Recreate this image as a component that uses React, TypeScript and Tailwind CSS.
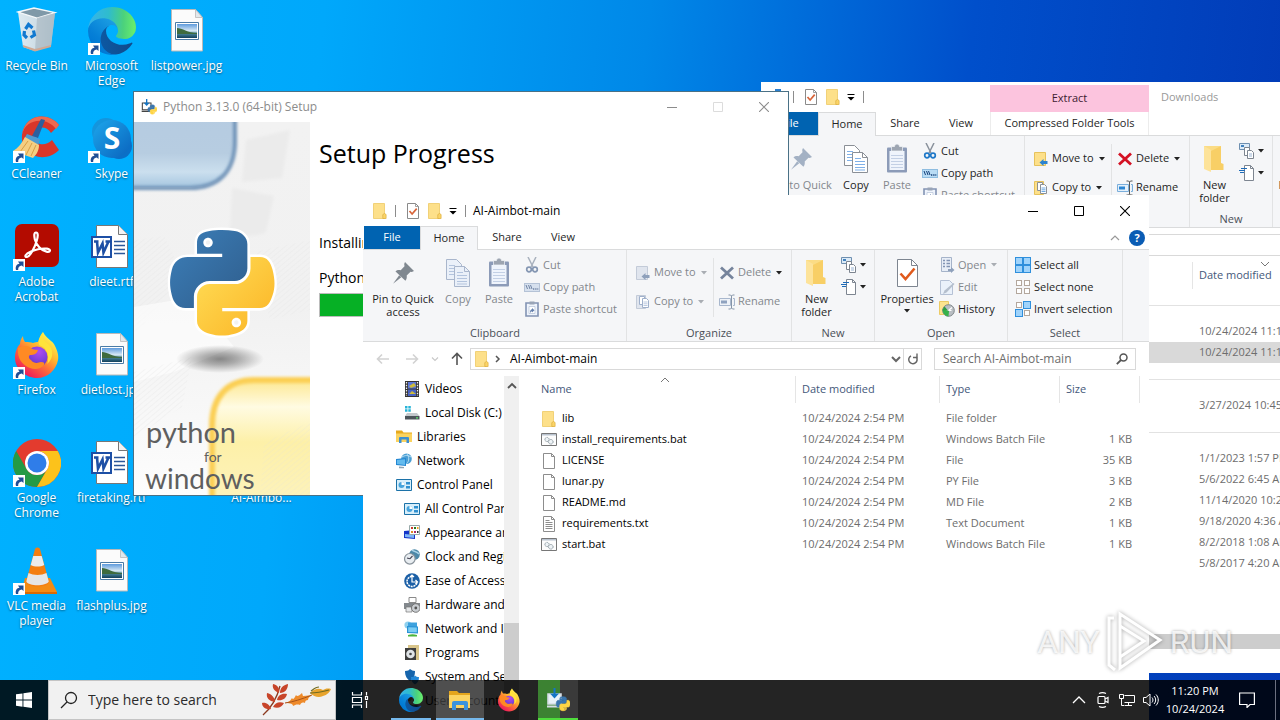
import type { ReactNode } from "react";

/* ---------- small drawings ---------- */

type IconProps = { className?: string };

function FolderIcon({ className = "h-4 w-4" }: IconProps) {
  return (
    <svg viewBox="0 0 16 16" className={className} aria-hidden="true">
      <path d="M1.5.5h11v15h-11z" fill="#fde08a" stroke="#edc964" strokeWidth=".8" />
      <path d="M12.500 10.500l1.600 1v4h-3.300v-3.900z" fill="#fbd468" stroke="#dcae3e" strokeWidth=".7" />
    </svg>
  );
}

function CheckPageIcon({ className = "h-4 w-4" }: IconProps) {
  return (
    <svg viewBox="0 0 16 16" className={className} aria-hidden="true">
      <path d="M2.500.5h8l3 3v12h-11z" fill="#fff" stroke="#8a8a8a" />
      <path d="M10.500.5v3h3" fill="none" stroke="#8a8a8a" strokeWidth=".8" />
      <path d="M4.500 8l2.600 3 4.600-5.400" fill="none" stroke="#d8653a" strokeWidth="1.700" />
    </svg>
  );
}

function QatCaret() {
  return (
    <svg viewBox="0 0 8 8" className="h-2 w-2" aria-hidden="true">
      <path d="M.5 1.500h7" stroke="#000" />
      <path d="M.5 4h7L4 7.500z" fill="#000" />
    </svg>
  );
}

function Caret({ dim = false }: { dim?: boolean }) {
  return (
    <svg viewBox="0 0 6 4" className="h-1 w-1.5" aria-hidden="true">
      <path d="M0 0h6L3 3.400z" fill={dim ? "#a9adb3" : "#222"} />
    </svg>
  );
}

function PinIcon({ blue = false }: { blue?: boolean }) {
  return (
    <svg viewBox="0 0 32 32" className="h-8 w-8" aria-hidden="true">
      <g fill={blue ? "#a3b1c4" : "#808890"}>
        <path d="M18 5l9 9-2.200 1-1.300-.2-3.800 3.800c.4 2.300-.2 4-1.300 5.200L8.500 14.500c1.200-1.200 3-1.700 5.200-1.200L17.500 9.300 17.200 7z" />
        <path d="M12.200 18.200l2.100 2.100-8.300 6.500z" />
      </g>
    </svg>
  );
}

function CopyIcon({ on }: { on: boolean }) {
  const edge = on ? "#8a8f96" : "#a9b6cc";
  const line = on ? "#7fb0e8" : "#b3c4de";
  return (
    <svg viewBox="0 0 32 32" className="h-8 w-8" aria-hidden="true">
      <path d="M4.500 2.500h10l5 5v15h-15z" fill={on ? "#fff" : "#eaf0f9"} stroke={edge} />
      <path d="M7 8.500h6M7 11.500h9M7 14.500h9M7 17.500h9" stroke={line} />
      <path d="M12.500 9.500h10l5 5v15h-15z" fill={on ? "#fff" : "#eaf0f9"} stroke={edge} />
      <path d="M22.500 9.500v5h5" fill="none" stroke={edge} />
      <path d="M15 15.500h6M15 18.500h10M15 21.500h10M15 24.500h10M15 27h10" stroke={line} strokeWidth="1.200" />
    </svg>
  );
}

function PasteIcon() {
  return (
    <svg viewBox="0 0 32 32" className="h-8 w-8" aria-hidden="true">
      <rect x="6" y="4.500" width="20" height="25" rx="1" fill="#8c9bb8" />
      <path d="M8.500 8h15v19h-15z" fill="#eff4fc" />
      <path d="M10 12.500h12M10 15.500h12M10 18.500h12M10 21.500h12M10 24.500h12" stroke="#c3d0e5" />
      <path d="M10.500 3.500h3a2.500 2.500 0 0 1 5 0h3v4.500h-11z" fill="#9da5b1" stroke="#f4f6f9" strokeWidth=".7" />
    </svg>
  );
}

function CutIcon({ on }: { on: boolean }) {
  return (
    <svg viewBox="0 0 16 16" className="h-4 w-4" aria-hidden="true">
      <path d="M4 0l5 10M12 0L7 10" stroke={on ? "#8a929c" : "#a9b2be"} strokeWidth="1.500" />
      <g fill="none" stroke={on ? "#1f78c8" : "#8496b2"} strokeWidth="1.700">
        <circle cx="5" cy="12.500" r="2.300" />
        <circle cx="11" cy="12.500" r="2.300" />
      </g>
    </svg>
  );
}

function CopyPathIcon({ on }: { on: boolean }) {
  return (
    <svg viewBox="0 0 16 16" className="h-4 w-4" aria-hidden="true">
      <rect x=".5" y="4.500" width="15" height="8" fill={on ? "#b9dcf5" : "#d6e0ee"} stroke={on ? "#8fbde0" : "#b4c2d6"} />
      <path d="M2 6l1.500 4M4.500 6l1.500 4M6.500 6L8 10" stroke={on ? "#143e78" : "#6f83a4"} />
      <path d="M9 10h1.300M11.200 10h1.300M13.300 10h1" stroke={on ? "#143e78" : "#6f83a4"} strokeWidth="1.300" />
    </svg>
  );
}

function PasteShortcutIcon() {
  return (
    <svg viewBox="0 0 16 16" className="h-4 w-4" aria-hidden="true">
      <path d="M2 2h12v13H2z" fill="#eff4fc" stroke="#8293b3" strokeWidth="1.600" />
      <path d="M5.500.5h5v3h-5z" fill="#99a4b6" />
      <path d="M5 5.500h6v7H5z" fill="#fff" stroke="#a9b8d2" strokeWidth=".6" />
      <path d="M6 12c0-2.500.8-3.500 2-3.700V7l2.500 2.300-2.500 2.300v-1.400C7.500 10.300 7 11 6 12z" fill="#6580ad" />
    </svg>
  );
}

function MoveToIcon({ on }: { on: boolean }) {
  return (
    <svg viewBox="0 0 16 16" className="h-4 w-4" aria-hidden="true">
      <path d="M1.500 1.500h11v13h-11z" fill={on ? "#fde08a" : "#e0e5ee"} stroke={on ? "#e6c25c" : "#c3cbd8"} />
      <path d="M6.500 11.500l4-3.500v2h4v3h-4v2z" fill={on ? "#2b83d0" : "#8ea0bb"} />
    </svg>
  );
}

function CopyToIcon({ on }: { on: boolean }) {
  return (
    <svg viewBox="0 0 16 16" className="h-4 w-4" aria-hidden="true">
      <path d="M1.500 1.500h9v13h-9z" fill={on ? "#fde08a" : "#e0e5ee"} stroke={on ? "#e6c25c" : "#c3cbd8"} />
      <path d="M4.500 2.500h5v8h-5z" fill="#fff" stroke={on ? "#8b9096" : "#9fb0cb"} />
      <path d="M7.500 4.500h4l2 2v7h-6z" fill="#fff" stroke={on ? "#8b9096" : "#9fb0cb"} />
      <path d="M8.500 8h4M8.500 9.800h4M8.500 11.500h4" stroke={on ? "#5e9fe0" : "#b3c4de"} strokeWidth=".9" />
    </svg>
  );
}

function DeleteIcon({ on }: { on: boolean }) {
  return (
    <svg viewBox="0 0 16 16" className="h-4 w-4" aria-hidden="true">
      <path d="M2 2.500l12 11M14 2.500l-12 11" stroke={on ? "#d41123" : "#76849c"} strokeWidth="2.800" />
    </svg>
  );
}

function RenameIcon({ on }: { on: boolean }) {
  return (
    <svg viewBox="0 0 16 16" className="h-4 w-4" aria-hidden="true">
      <path d="M.5 4.500h11v7H.5zM14 4.500h1.500v7H14" fill={on ? "#e5f1fb" : "#eef2f8"} stroke={on ? "#7aaedb" : "#a8b7cd"} />
      <path d="M2 6.500h6v3H2z" fill={on ? "#2d86d3" : "#8fa2bf"} />
      <path d="M9.500 1h2l1 1 1-1h2M12.500 2v12M9.500 15h2l1-1 1 1h2" fill="none" stroke={on ? "#555" : "#8594a8"} />
    </svg>
  );
}

function NewFolderIcon() {
  return (
    <svg viewBox="0 0 32 32" className="h-8 w-8" aria-hidden="true">
      <path d="M5 3h17v18H5z" fill="#fbdc85" />
      <path d="M12 8l10-5v17l2.500 1v6H12z" fill="#f8cf66" />
      <path d="M5 3l7 4v22l-7-3z" fill="#fde39a" />
    </svg>
  );
}

function NewItemIcon() {
  return (
    <svg viewBox="0 0 16 16" className="h-4 w-4" aria-hidden="true">
      <path d="M.5.500h10v6H.5z" fill="#dcebf8" stroke="#6e8fb0" />
      <path d="M2 2h3v2H2z" fill="#3f80bd" />
      <path d="M5.500 4.500h5v8h-5z" fill="#fff" stroke="#7d8590" />
      <path d="M8.500 7.500h4l2 2v6h-6z" fill="#fff" stroke="#7d8590" />
      <path d="M10 11h3M10 13h3" stroke="#9ab4d4" />
    </svg>
  );
}

function EasyAccessIcon() {
  return (
    <svg viewBox="0 0 16 16" className="h-4 w-4" aria-hidden="true">
      <path d="M5.500.5h6l3 3v12h-9z" fill="#fff" stroke="#7d8590" />
      <path d="M11.500.5v3h3" fill="none" stroke="#7d8590" />
      <path d="M2 3.500h6M0 5.500h6M1 7.500h4" stroke="#1e6bb8" strokeWidth="1.200" />
    </svg>
  );
}

function PropertiesIcon() {
  return (
    <svg viewBox="0 0 32 32" className="h-8 w-8" aria-hidden="true">
      <path d="M6.500 2.500h14l6 6v21h-20z" fill="#fff" stroke="#7d8590" />
      <path d="M20.500 2.500v6h6" fill="none" stroke="#7d8590" />
      <path d="M9.500 16.500l5 5.500 9-10.500" fill="none" stroke="#e05a1c" strokeWidth="2.600" />
    </svg>
  );
}

function OpenIcon() {
  return (
    <svg viewBox="0 0 16 16" className="h-4 w-4" aria-hidden="true">
      <path d="M2.500.5h10v14h-10z" fill="#e8eef7" stroke="#a5b3c9" />
      <path d="M4 3.500h2M4 6.500h2M4 9.500h2M7.500 3.500H11M7.500 6.500H11M7.500 9.500H11" stroke="#8193b3" strokeWidth="1.300" />
      <path d="M9 12h3v-2l3.500 3-3.500 3v-2H9z" fill="#8ea0bb" />
    </svg>
  );
}

function EditIcon() {
  return (
    <svg viewBox="0 0 16 16" className="h-4 w-4" aria-hidden="true">
      <path d="M1.500 1.500h9l3 3v11h-12z" fill="#eaf1fa" stroke="#b5c1d5" />
      <path d="M14.500 4l1 1-8 8.500-3.500 1.500 1.500-3.500z" fill="#b5bfcd" />
    </svg>
  );
}

function HistoryIcon() {
  return (
    <svg viewBox="0 0 16 16" className="h-4 w-4" aria-hidden="true">
      <path d="M.5.500h9v13h-9z" fill="#fde48f" stroke="#eccb64" />
      <circle cx="9.500" cy="9.500" r="5.800" fill="#b9bec3" stroke="#7e8589" />
      <path d="M4 8a6 6 0 0 0 5.500 7.500l.5-5.500z" fill="#37b24a" />
      <path d="M3 9.500l2.500-4 3 3.500z" fill="#2f9e41" />
      <path d="M9.500 9.500L13 6.500M9.500 9.500h3" stroke="#fff" strokeWidth="1.200" />
    </svg>
  );
}

function SelectTiles({ filled }: { filled: [boolean, boolean, boolean, boolean] }) {
  const spots = [
    [0.5, 0.5],
    [8.5, 0.5],
    [0.5, 8.5],
    [8.5, 8.5],
  ];
  return (
    <svg viewBox="0 0 16 16" className="h-4 w-4" aria-hidden="true">
      {spots.map(([x, y], i) =>
        filled[i] ? (
          <rect key={i} x={x} y={y} width="7" height="7" fill="#9fd3fb" stroke="#2f8fdc" />
        ) : (
          <rect key={i} x={x + 1} y={y + 1} width="5" height="5" fill="#fff" stroke="#b3a79d" />
        ),
      )}
    </svg>
  );
}

function PageIcon({ lines = false }: { lines?: boolean }) {
  return (
    <svg viewBox="0 0 16 16" className="h-4 w-4" aria-hidden="true">
      <path d="M2.500.5h8l3 3v12h-11z" fill="#fff" stroke="#8d8d8d" />
      <path d="M10.500.5v3h3" fill="none" stroke="#8d8d8d" />
      {lines && <path d="M4.500 4.500h4M4.500 6.500h7M4.500 8.500h7M4.500 10.500h7M4.500 12.500h7" stroke="#8d8d8d" />}
    </svg>
  );
}

function BatIcon() {
  return (
    <svg viewBox="0 0 16 16" className="h-4 w-4" aria-hidden="true">
      <path d="M.5 1.500h15v12H.5z" fill="#fdfdfd" stroke="#777" />
      <path d="M1 2h14v1.500H1z" fill="#b9c3cf" />
      <g fill="#eef3f6" stroke="#8a979f">
        <circle cx="6" cy="7.500" r="2.100" strokeDasharray="1.200 .5" />
        <circle cx="9.800" cy="9.800" r="2.300" strokeDasharray="1.200 .5" />
      </g>
    </svg>
  );
}

const treeIcons: Record<string, ReactNode> = {
  video: (
    <>
      <path d="M1 0h14v16H1z" fill="#333" />
      <path d="M2.500 1v14M13.500 1v14" stroke="#eee" strokeWidth="1.300" strokeDasharray="1.500 1.200" />
      <path d="M4 1h8v6.500H4z" fill="#5b76d8" />
      <path d="M4 8.500h8V15H4z" fill="#4963c4" />
      <path d="M5 5l5-3 2 3-5 2zM5 13l3-3 4 3" fill="#cdbb3c" />
    </>
  ),
  disk: (
    <>
      <path d="M1 1h2.500v2.500H1zM4.300 1h2.500v2.500H4.300zM1 4.300h2.500v2.500H1zM4.300 4.300h2.500v2.500H4.300z" fill="#28b4d8" />
      <path d="M3 8h10l2.500 3H1z" fill="#c3c8cc" />
      <path d="M1 11h14.500v3.500H1z" fill="#4c545a" />
      <path d="M12 12.800h2" stroke="#59e26a" strokeWidth="1.200" />
    </>
  ),
  library: (
    <>
      <path d="M0 1.500h6l1.500 2H16V13H0z" fill="#e7a91c" />
      <path d="M0 4.500h16V13H0z" fill="#fbd35f" />
      <path d="M3 14V9a1 1 0 0 1 1-1h8a1 1 0 0 1 1 1v5h-2.500v-3.500h-5V14z" fill="#3d8fd1" />
    </>
  ),
  network: (
    <>
      <circle cx="10.500" cy="5.800" r="5.300" fill="#4a9ed4" />
      <path d="M6 4c3-2 6-2 9 0M10.500.5c3 3 3 8 0 10" fill="none" stroke="#b9e0f5" />
      <path d="M0 6l10-1v8L0 12z" fill="#2487d2" />
      <path d="M1 7l8-.8v5.700L1 11z" fill="#63bbee" />
      <path d="M3 13.500l5 .5v1.200H3z" fill="#8ea3b3" />
    </>
  ),
  panel: (
    <>
      <path d="M.5 2.500h15v11H.5z" fill="#d8effb" stroke="#1c72a8" />
      <circle cx="5.500" cy="8" r="3" fill="#46a4dd" />
      <path d="M5.500 8V5a3 3 0 0 1 3 3z" fill="#fff" />
      <path d="M10 5h4v2.500h-4zM10 9h4v2.500h-4z" fill="#2f90d0" />
    </>
  ),
  appearance: (
    <>
      <path d="M0 6l11-1v9L0 13z" fill="#1435c8" />
      <path d="M1 9l9 1v3L1 12z" fill="#7db5f7" />
      <path d="M5.500.5h10v9h-10z" fill="#fff" stroke="#9aa" />
      <path d="M7 2h2v2H7z" fill="#cc3a2f" />
      <path d="M10 2h2v2h-2z" fill="#272" />
      <path d="M13 2h1.500v2H13z" fill="#f0a21f" />
      <path d="M7 6h2v2H7z" fill="#e08a1f" />
      <path d="M10 6h2v2h-2z" fill="#b12d6b" />
      <path d="M13 6h1.500v2H13z" fill="#333" />
    </>
  ),
  clock: (
    <>
      <circle cx="10.500" cy="5.500" r="5.300" fill="#4c88a8" />
      <path d="M8 1c2 2 5 1 7 4" fill="none" stroke="#a9d3e8" strokeWidth="1.500" />
      <circle cx="5.800" cy="9.800" r="5.300" fill="#e8edf1" stroke="#8a949c" strokeWidth="1.200" />
      <path d="M5.800 9.800L8.500 7M5.800 9.800L3 9" stroke="#445" strokeWidth="1.100" />
    </>
  ),
  ease: (
    <>
      <circle cx="8" cy="8" r="7.800" fill="#1b5fa6" />
      <path d="M8 3.500a5 5 0 1 0 5 5" fill="none" stroke="#fff" strokeWidth="1.500" strokeDasharray="2 .8" />
      <path d="M8 2v7h5.500M11.500 7l2 2-2 2M6 4l2-2 2 2" fill="none" stroke="#fff" strokeWidth="1.200" />
    </>
  ),
  hardware: (
    <>
      <path d="M5 .5h7v5H5z" fill="#fff" stroke="#8a8a8a" />
      <path d="M0 6h16v6H0z" fill="#83888d" />
      <path d="M2 10h6v5H2z" fill="#e4e6e8" stroke="#777" strokeWidth=".7" />
      <circle cx="11.800" cy="11" r="4.300" fill="#c9cdd1" stroke="#767676" />
      <circle cx="11.800" cy="11" r="1.400" fill="#555" />
    </>
  ),
  internet: (
    <>
      <circle cx="4" cy="4" r="3.600" fill="#8fd0ee" />
      <path d="M4 1.500h9v7H4z" fill="#3ea2de" />
      <path d="M3 5l11 .5v7L3 12z" fill="#2a93d6" />
      <path d="M4.200 6.200l8.600.4v4.700l-8.600-.3z" fill="#7bcdf4" />
      <path d="M4 14c3-1 6-1 9 0v1.500H4z" fill="#4cb43c" />
    </>
  ),
  programs: (
    <>
      <path d="M4 0h11v15H4z" fill="#d9c58a" />
      <path d="M1 3h11v12H1z" fill="#3d3d3d" />
      <circle cx="6.500" cy="9" r="4.300" fill="#dfe3e6" />
      <circle cx="6.500" cy="9" r="1.300" fill="#444" />
    </>
  ),
  shield: (
    <>
      <path d="M1 2c3 0 4-1 5-2 1.500 1 3 2 5 2 0 6-2 8-5 10-3-2-5-5-5-10z" fill="#1765ac" />
      <path d="M7 8c2.500 0 3-.5 4-1.500C12 7.500 13.500 8 15 8c0 4-1.500 6-4 7.500C8.500 14 7 12 7 8z" fill="#2388d8" />
    </>
  ),
  users: (
    <>
      <circle cx="5" cy="5" r="3" fill="#c98d5c" />
      <path d="M0 15c0-5 10-5 10 0z" fill="#3f9d55" />
      <circle cx="11" cy="6" r="2.500" fill="#d8a575" />
      <path d="M7 15c0-4 9-4 9 0z" fill="#3274c0" />
    </>
  ),
};

function TreeIcon({ name }: { name: string }) {
  return (
    <svg viewBox="0 0 16 16" className="h-4 w-4 shrink-0" aria-hidden="true">
      {treeIcons[name]}
    </svg>
  );
}

/* ---------- application logos ---------- */

function EdgeLogo({ className, id }: { className: string; id: string }) {
  return (
    <svg viewBox="0 0 256 256" className={className} aria-hidden="true">
      <defs>
        <linearGradient id={`${id}a`} x1="63" y1="177" x2="241" y2="177" gradientUnits="userSpaceOnUse">
          <stop offset="0" stopColor="#0c59a4" />
          <stop offset="1" stopColor="#114a8b" />
        </linearGradient>
        <linearGradient id={`${id}b`} x1="157" y1="99" x2="46" y2="221" gradientUnits="userSpaceOnUse">
          <stop offset="0" stopColor="#1b9de2" />
          <stop offset=".2" stopColor="#1595df" />
          <stop offset=".7" stopColor="#0680d7" />
          <stop offset="1" stopColor="#0078d4" />
        </linearGradient>
        <linearGradient id={`${id}c`} x1="20" y1="80" x2="250" y2="90" gradientUnits="userSpaceOnUse">
          <stop offset="0" stopColor="#35b4e8" />
          <stop offset=".4" stopColor="#2fbccd" />
          <stop offset=".75" stopColor="#4bd17c" />
          <stop offset="1" stopColor="#66eb6e" />
        </linearGradient>
      </defs>
      <g transform="translate(-4.630 -4.920)">
        <path d="M235.680 195.460a93.730 93.730 0 0 1-10.540 4.710 101.870 101.870 0 0 1-35.900 6.460c-47.320 0-88.540-32.550-88.540-74.320A31.480 31.480 0 0 1 117.130 105c-42.800 1.800-53.800 46.400-53.800 72.530 0 73.880 68.090 81.370 82.760 81.370 7.910 0 19.840-2.300 27-4.560l1.310-.44a128.340 128.340 0 0 0 66.600-52.800 4 4 0 0 0-5.320-5.640Z" fill={`url(#${id}a)`} />
        <path d="M110.340 246.340A79.200 79.200 0 0 1 87.600 225a80.720 80.720 0 0 1 29.530-120c3.120-1.470 8.450-4.130 15.540-4a32.350 32.350 0 0 1 25.690 13 31.880 31.880 0 0 1 6.360 18.660c0-.21 24.460-79.600-80-79.600-43.900 0-80 41.660-80 78.210a130.150 130.150 0 0 0 12.110 56 128 128 0 0 0 156.380 67.110 75.550 75.550 0 0 1-62.780-8Z" fill={`url(#${id}b)`} />
        <path d="M156.940 153.780c-.81 1.050-3.300 2.500-3.300 5.660 0 2.610 1.700 5.120 4.720 7.230 14.380 10 41.490 8.680 41.560 8.680a59.560 59.560 0 0 0 30.270-8.350 61.380 61.380 0 0 0 30.430-52.880c.26-22.410-8-37.310-11.340-43.910C228.090 28.760 182.350 4.920 132.610 4.920a128 128 0 0 0-128 126.200c.48-36.540 36.800-66.050 80-66.050 3.500 0 23.460.34 42 10.070 16.340 8.580 24.900 18.940 30.850 29.210 6.180 10.670 7.280 24.150 7.280 29.520s-2.740 13.330-7.800 19.910Z" fill={`url(#${id}c)`} />
      </g>
    </svg>
  );
}

function FirefoxLogo({ className, id }: { className: string; id: string }) {
  return (
    <svg viewBox="0 0 48 48" className={className} aria-hidden="true">
      <defs>
        <linearGradient id={`${id}a`} x1="38" y1="6" x2="10" y2="42" gradientUnits="userSpaceOnUse">
          <stop offset="0" stopColor="#fff44f" />
          <stop offset=".35" stopColor="#ffb62e" />
          <stop offset=".6" stopColor="#ff7139" />
          <stop offset="1" stopColor="#ee1a5b" />
        </linearGradient>
        <radialGradient id={`${id}b`} cx=".6" cy=".25" r=".8">
          <stop offset="0" stopColor="#b04bf0" />
          <stop offset=".6" stopColor="#7a3fdc" />
          <stop offset="1" stopColor="#4f37b5" />
        </radialGradient>
      </defs>
      <path d="M30 1c2 4 5 6 8 9 2 1 3 3 4 5 2 4 4 9 3 14-2 10-10 18-21 18S2 38 2 27c0-6 2-11 5-14 0-3 1-5 3-8 0 3 1 4 2 6 3 0 6 0 8 1 2-1 4-1 5-1 1-4 3-7 5-10z" fill={`url(#${id}a)`} />
      <circle cx="24" cy="26" r="10.500" fill={`url(#${id}b)`} />
      <path d="M5 17c4-2 8-3 12-1 1 2 4 3 8 3-1 4-4 5-8 5-2 1-1 4 1 5 3 4 7 3 10 2 3 0 4 1 3 3-3 4-9 5-14 3C9 34 4 27 5 17z" fill="#ff8a24" />
      <path d="M30 1c-3 4-5 8-4 13 6 2 9 7 9 12 0 3 0 5-1 7 7-5 7-16 0-21-4-3-5-6-4-11z" fill="#ffe33b" />
    </svg>
  );
}

const pyBlue =
  "M63.391 1.988c-4.222.02-8.252.379-11.800 1.007-10.450 1.846-12.346 5.710-12.346 12.837v9.411h24.693v3.137H29.977c-7.176 0-13.460 4.313-15.426 12.521-2.268 9.405-2.368 15.275 0 25.096 1.755 7.311 5.947 12.519 13.124 12.519h8.491V67.234c0-8.151 7.051-15.340 15.426-15.340h24.665c6.866 0 12.346-5.654 12.346-12.548V15.833c0-6.693-5.646-11.720-12.346-12.837-4.244-.706-8.645-1.027-12.866-1.008zM50.037 9.557c2.550 0 4.634 2.117 4.634 4.721 0 2.593-2.083 4.690-4.634 4.690-2.560 0-4.633-2.097-4.633-4.690-.001-2.604 2.073-4.721 4.633-4.721z";
const pyYellow =
  "M91.682 28.380v10.966c0 8.500-7.208 15.655-15.426 15.655H51.591c-6.756 0-12.346 5.783-12.346 12.549v23.515c0 6.691 5.818 10.628 12.346 12.547 7.816 2.297 15.312 2.713 24.665 0 6.216-1.801 12.346-5.423 12.346-12.547v-9.412H63.938v-3.138h37.012c7.176 0 9.852-5.005 12.348-12.519 2.578-7.735 2.467-15.174 0-25.096-1.774-7.145-5.161-12.521-12.348-12.521h-9.268zM77.809 87.927c2.561 0 4.634 2.097 4.634 4.692 0 2.602-2.074 4.719-4.634 4.719-2.550 0-4.633-2.117-4.633-4.719 0-2.595 2.083-4.692 4.633-4.692z";

function PythonSetupIcon({ className, light = false }: { className: string; light?: boolean }) {
  return (
    <svg viewBox="0 0 24 24" className={className} aria-hidden="true">
      <path d="M2 6h13v10H2z" fill={light ? "#e8f1f8" : "#fff"} stroke={light ? "#d5dde5" : "#444"} strokeWidth="1.600" />
      <path d="M1 18.500h13" stroke={light ? "#d5dde5" : "#444"} strokeWidth="2" />
      <path d="M7.500 0h2v5.500H13L8.500 10.500 4 5.500h3.500z" fill="#1475c4" />
      <g transform="translate(8.500 8.500) scale(.135)">
        <path d={pyBlue} fill="#3a75ad" stroke="#3a75ad" strokeWidth="4" />
        <path d={pyYellow} fill="#ffd545" stroke="#ffd545" strokeWidth="4" />
      </g>
    </svg>
  );
}

function PictureFile() {
  return (
    <svg viewBox="0 0 48 48" className="h-12 w-12" aria-hidden="true">
      <defs>
        <linearGradient id="sky" x1="0" y1="0" x2="0" y2="1">
          <stop offset="0" stopColor="#5e9bdd" />
          <stop offset=".5" stopColor="#dcebf5" />
          <stop offset=".65" stopColor="#4d8a9c" />
          <stop offset="1" stopColor="#123f5c" />
        </linearGradient>
      </defs>
      <path d="M8.500 2.500h24l7 8v33.500h-31z" fill="#fbfbfb" stroke="#b9b9b9" />
      <path d="M32.500 2.500v8h7z" fill="#e2e8ec" stroke="#b9b9b9" strokeWidth=".8" />
      <path d="M12.500 15.500h23v17h-23z" fill="#fff" stroke="#4a7ba6" />
      <path d="M14 17h20v14H14z" fill="url(#sky)" />
      <path d="M14 21c5 0 11 5 20 5v1H14z" fill="#3f6b3e" />
    </svg>
  );
}

function WordFile() {
  return (
    <svg viewBox="0 0 48 48" className="h-12 w-12" aria-hidden="true">
      <path d="M8.500 2.500h22l9 9v33h-31z" fill="#fff" stroke="#777" />
      <path d="M30.500 2.500v9h9" fill="#f3f3f3" stroke="#777" />
      <path d="M26 18.500h11M26 22.500h11M26 26.500h11M26 30.500h11" stroke="#2b579a" strokeWidth="1.500" />
      <path d="M4 14h19v20H4z" fill="#fff" stroke="#1d4fa5" strokeWidth="2" />
      <path d="M6 18.500h4.500M9 18.500l1 11 4.500-9 1 9 5-11M17.500 18.500H22" fill="none" stroke="#1d4fa5" strokeWidth="2.600" />
    </svg>
  );
}

function RecycleBin() {
  return (
    <svg viewBox="0 0 48 48" className="h-12 w-12" aria-hidden="true">
      <defs>
        <linearGradient id="bin" x1="0" y1="0" x2="1" y2="0">
          <stop offset="0" stopColor="#e9eef1" />
          <stop offset=".5" stopColor="#d9e0e5" />
          <stop offset="1" stopColor="#b4c1ca" />
        </linearGradient>
      </defs>
      <path d="M5 5h19l18 1-4 33-16 5-12-4z" fill="url(#bin)" opacity=".95" />
      <path d="M5 5l16-4 21 4.500L24 11z" fill="#7f99a8" stroke="#f5f8fa" strokeWidth="1.300" />
      <path d="M24 11l18-5-4 33-16 5z" fill="#aebcc6" opacity=".75" />
      <path d="M10 38l12 4 16-4v2l-16 4.500L10 40z" fill="#cfa994" />
      <g fill="none" stroke="#1179d0" strokeWidth="3.200">
        <path d="M12.500 22l3-4.500 4 3.500" />
        <path d="M20.500 23.500l1 4.500-4 2.500" />
        <path d="M14 31l-3-3 .5-4" />
      </g>
    </svg>
  );
}

function CCleaner() {
  return (
    <svg viewBox="0 0 48 48" className="h-12 w-12" aria-hidden="true">
      <path d="M46 10C36-3 12-2 9 20c-2 20 22 30 37 15l-7-10c-8 8-18 4-18-5 1-9 12-10 17-2z" fill="#d9362a" />
      <path d="M46 10C36-3 12-2 9 20c3-16 24-19 34-6z" fill="#ee6a50" />
      <path d="M28 4l4 1-7 18-6-2z" fill="#2c5f9e" />
      <path d="M14 19l13 5-2 7-14-7z" fill="#4f9bd1" />
      <path d="M12 22l14 8c0 6-3 10-6 13L0 36c5-3 9-8 12-14z" fill="#f5ce82" />
      <path d="M15 26L7 37M19 28l-6 12M23 30l-5 11" stroke="#d99e45" />
    </svg>
  );
}

function Skype() {
  return (
    <svg viewBox="0 0 48 48" className="h-12 w-12" aria-hidden="true">
      <defs>
        <linearGradient id="skype" x1="0" y1="0" x2="1" y2="1">
          <stop offset="0" stopColor="#1ca7ec" />
          <stop offset="1" stopColor="#0a63bd" />
        </linearGradient>
      </defs>
      <circle cx="18" cy="17" r="14" fill="#1495dd" />
      <circle cx="31" cy="31" r="13" fill="#0b6fc6" />
      <circle cx="24" cy="24" r="19" fill="url(#skype)" />
      <text x="24" y="34" textAnchor="middle" fontSize="30" fontWeight="700" fill="#fff" fontFamily="Open Sans">
        S
      </text>
    </svg>
  );
}

function Acrobat() {
  return (
    <svg viewBox="0 0 48 48" className="h-12 w-12" aria-hidden="true">
      <rect x="2" y="1" width="44" height="43" rx="7" fill="#b30b00" />
      <path
        d="M23 9.500c2.500 0 2 4.500.5 9-2 6.500-6.500 15-9.500 15.500-3 0-2-3 4-5.500 5-2 11.500-3.500 16-2.800 4.500.8 3.500 3.800-.5 3-5-1-10.500-7-11.700-12.500C21 12.500 21 9.500 23 9.500z"
        fill="none"
        stroke="#fff"
        strokeWidth="2.200"
      />
    </svg>
  );
}

function Chrome() {
  return (
    <svg viewBox="0 0 48 48" className="h-12 w-12" aria-hidden="true">
      <circle cx="24" cy="24" r="24" fill="#e33b2e" />
      <path d="M3.200 12A24 24 0 0 0 24 48l10.400-18A12 12 0 0 1 13.600 30z" fill="#249a45" />
      <path d="M24 12h20.800A24 24 0 0 1 24 48l10.400-18A12 12 0 0 0 24 12z" fill="#fcc21b" />
      <circle cx="24" cy="24" r="12" fill="#fff" />
      <circle cx="24" cy="24" r="9.500" fill="#2f7de9" />
    </svg>
  );
}

function Vlc() {
  return (
    <svg viewBox="0 0 48 48" className="h-12 w-12" aria-hidden="true">
      <path d="M12 31h25l7 14c0 1-1 2-2 2H8z" fill="#f48b14" />
      <path d="M8 45h36v2H8z" fill="#d96a05" />
      <path d="M22 2c1-2 4-2 5 0l9 33c-1 6-22 6-23 0z" fill="#f47e10" />
      <path d="M20.200 9h8.500l2.500 9c-4 2-9.500 2-13.500 0z" fill="#ececec" />
      <path d="M15.500 26c5 2.500 13 2.500 18 0l2.300 8.500c-3 5-20 5-22.500 0z" fill="#e6e6e6" />
    </svg>
  );
}

function ShortcutArrow() {
  return (
    <svg viewBox="0 0 12 12" className="absolute bottom-0 left-0 h-3 w-3" aria-hidden="true">
      <path d="M0 0h12v12H0z" fill="#fff" />
      <path d="M3 11c-1-4 1-6 3.500-6.300L5 2.500h5.500V8L8.800 6.500C6 7 5 8.500 5.200 11z" fill="#1f4e96" />
    </svg>
  );
}

/* ---------- desktop ---------- */

type DesktopItem = { label: string; icon: ReactNode; shortcut?: boolean } | null;

const desktop: DesktopItem[][] = [
  [
    { label: "Recycle Bin", icon: <RecycleBin /> },
    { label: "CCleaner", icon: <CCleaner />, shortcut: true },
    { label: "Adobe Acrobat", icon: <Acrobat />, shortcut: true },
    { label: "Firefox", icon: <FirefoxLogo className="h-12 w-12" id="ffd" />, shortcut: true },
    { label: "Google Chrome", icon: <Chrome />, shortcut: true },
    { label: "VLC media player", icon: <Vlc />, shortcut: true },
  ],
  [
    { label: "Microsoft Edge", icon: <EdgeLogo className="h-12 w-12" id="edd" />, shortcut: true },
    { label: "Skype", icon: <Skype />, shortcut: true },
    { label: "dieet.rtf", icon: <WordFile /> },
    { label: "dietlost.jpg", icon: <PictureFile /> },
    { label: "firetaking.rtf", icon: <WordFile /> },
    { label: "flashplus.jpg", icon: <PictureFile /> },
  ],
  [{ label: "listpower.jpg", icon: <PictureFile /> }],
  [null, null, null, null, { label: "AI-Aimbo...", icon: <FolderIcon className="h-12 w-12" /> }],
];

function DesktopIcons() {
  return (
    <div className="flex">
      {desktop.map((col, c) => (
        <div key={c} className="flex w-[75px] flex-col">
          {col.map((item, r) => (
            <div key={r} className="flex h-[108px] flex-col items-center pr-0.5 pt-[7px]">
              {item && (
                <>
                  <div className="relative h-12 w-12">
                    {item.icon}
                    {item.shortcut && <ShortcutArrow />}
                  </div>
                  <span className="mt-[3px] w-[72px] whitespace-normal text-center leading-[15px] text-white [text-shadow:0_1px_2px_rgba(0,0,0,0.500)]">
                    {item.label}
                  </span>
                </>
              )}
            </div>
          ))}
        </div>
      ))}
    </div>
  );
}

/* ---------- python installer ---------- */

function InstallerArt() {
  return (
    <svg viewBox="0 0 176 373" className="h-full w-[176px] shrink-0" role="img" aria-label="python for windows">
      <defs>
        <linearGradient id="paper" x1="0" y1="0" x2="0" y2="1">
          <stop offset="0" stopColor="#f2f2f2" />
          <stop offset=".5" stopColor="#f1f1f1" />
          <stop offset="1" stopColor="#fdfdfd" />
        </linearGradient>
        <linearGradient id="blueTab" x1="0" y1="0" x2="0" y2="1">
          <stop offset="0" stopColor="#b5cbe1" />
          <stop offset=".55" stopColor="#b7cde1" />
          <stop offset=".8" stopColor="#cbdfee" />
          <stop offset="1" stopColor="#a6c6e0" />
        </linearGradient>
        <linearGradient id="yellowTab" x1="0" y1="0" x2="0" y2="1">
          <stop offset="0" stopColor="#fde78e" />
          <stop offset=".22" stopColor="#fffbe2" />
          <stop offset=".5" stopColor="#fdf0a8" />
          <stop offset="1" stopColor="#fdf3bd" />
        </linearGradient>
        <linearGradient id="pyB" x1="0" y1="0" x2="1" y2="1">
          <stop offset="0" stopColor="#3c7fb9" />
          <stop offset="1" stopColor="#2f5d8c" />
        </linearGradient>
        <linearGradient id="pyY" x1="0" y1="0" x2="1" y2="1">
          <stop offset="0" stopColor="#ffdf58" />
          <stop offset="1" stopColor="#fbb324" />
        </linearGradient>
        <radialGradient id="shade">
          <stop offset="0" stopColor="#000" stopOpacity=".45" />
          <stop offset=".4" stopColor="#000" stopOpacity=".3" />
          <stop offset="1" stopColor="#000" stopOpacity="0" />
        </radialGradient>
        <pattern id="hatch" width="4" height="4" patternUnits="userSpaceOnUse" patternTransform="rotate(50)">
          <path d="M0 0v4" stroke="#dedede" strokeWidth="1.200" />
        </pattern>
        <filter id="soft" x="-10%" y="-10%" width="120%" height="120%">
          <feGaussianBlur stdDeviation="1.600" />
        </filter>
      </defs>
      <rect width="176" height="373" fill="url(#paper)" />
      <path d="M112 18l44-10-8 48-40 4zM98 66l42 8-8 36c-12 6-26 4-36-2z" fill="#ebebeb" filter="url(#soft)" />
      <path d="M0 118l30-4 20 40-50 60zM120 130l56-12v70l-40 10z" fill="url(#hatch)" opacity=".35" />
      <path d="M0 185l60-10 40 50-60 25-40 10z" fill="#fff" opacity=".6" />
      <path d="M0 250l58-15-10 50-48 30z" fill="url(#hatch)" opacity=".4" />
      <path d="M-10-10h111v28c0 32-18 47-44 47H-10z" fill="url(#blueTab)" />
      <path d="M-10 66h66c27 0 45-15 45-47v-30" fill="none" stroke="#6f93b8" strokeWidth="4" filter="url(#soft)" />
      <path d="M180 257h-60c-28 0-42 18-42 46v80h102z" fill="url(#yellowTab)" />
      <path d="M180 258h-60c-28 0-42 18-42 46v80" fill="none" stroke="#fbcf55" strokeWidth="6" filter="url(#soft)" />
      <path d="M130 320l46-20v73h-50z" fill="url(#hatch)" opacity=".3" />
      <ellipse cx="86" cy="237" rx="44" ry="14" fill="url(#shade)" />
      <g transform="translate(23 106) scale(1.020)">
        <g fill="#fff" stroke="#fff" strokeWidth="5">
          <path d={pyBlue} />
          <path d={pyYellow} />
        </g>
        <path d={pyBlue} fill="url(#pyB)" />
        <path d={pyYellow} fill="url(#pyY)" />
      </g>
      <g fill="#5f5f5f" fontFamily="Lato, Open Sans, sans-serif" fontWeight="400">
        <text x="12" y="321" fontSize="29">python</text>
        <text x="70" y="340" fontSize="14">for</text>
        <text x="11" y="367" fontSize="28">windows</text>
      </g>
    </svg>
  );
}

function CaptionButtons({ color, maxColor }: { color: string; maxColor: string }) {
  return (
    <div className="ml-auto flex h-full items-center pr-px">
      <button aria-label="Minimize" className="flex h-full w-[46px] items-center justify-center">
        <svg viewBox="0 0 10 10" className="h-2.5 w-2.5">
          <path d="M0 5.500h10" stroke={color} />
        </svg>
      </button>
      <button aria-label="Maximize" className="flex h-full w-[46px] items-center justify-center">
        <svg viewBox="0 0 10 10" className="h-2.5 w-2.5">
          <path d="M.5.5h9v9h-9z" fill="none" stroke={maxColor} />
        </svg>
      </button>
      <button aria-label="Close" className="flex h-full w-[46px] items-center justify-center">
        <svg viewBox="0 0 10 10" className="h-2.5 w-2.5">
          <path d="M0 0l10 10M10 0L0 10" stroke={color} strokeWidth="1.100" />
        </svg>
      </button>
    </div>
  );
}

function InstallerWindow() {
  return (
    <section className="absolute left-[133px] top-[91px] flex h-[405px] w-[656px] flex-col border border-[#4a7186] bg-white">
      <header className="flex h-[30px] shrink-0 items-center pl-[7px] text-[#8c8c8c]">
        <PythonSetupIcon className="h-4 w-4" />
        <span className="pl-1.5">Python 3.13.0 (64-bit) Setup</span>
        <CaptionButtons color="#8c8c8c" maxColor="#dcdcdc" />
      </header>
      <div className="flex min-h-0 flex-1">
        <InstallerArt />
        <div className="flex flex-1 flex-col pl-[9px] pr-6 text-sm text-black">
          <h1 className="mt-3 h-[38px] text-[25px] leading-[38px]">Setup Progress</h1>
          <p className="mt-[61px] h-5 leading-5">Installing:</p>
          <p className="mt-[15px] h-5 leading-5">Python 3.13.0</p>
          <div className="mt-[5px] h-6 border border-[#bcbcbc] bg-[#e6e6e6]">
            <div className="h-full w-1/3 bg-[#06b025]" />
          </div>
        </div>
      </div>
    </section>
  );
}

/* ---------- explorer ---------- */

function BigButton({ icon, lines, dim = false, width, caret = false }: { icon: ReactNode; lines: string[]; dim?: boolean; width: string; caret?: boolean }) {
  return (
    <button className={`flex shrink-0 flex-col items-center pt-[7px] ${width} ${dim ? "text-[#83878d]" : "text-[#1e1e1e]"}`}>
      {icon}
      <span className="mt-[3px] flex flex-col leading-[13px]">
        {lines.map((l) => (
          <span key={l}>{l}</span>
        ))}
      </span>
      {caret && (
        <span className="mt-1">
          <Caret />
        </span>
      )}
    </button>
  );
}

function SmallButton({ icon, label, dim = false, caret, tall = false }: { icon: ReactNode; label?: string; dim?: boolean; caret?: "dim" | "dark"; tall?: boolean }) {
  return (
    <button className={`flex items-center gap-[3px] ${tall ? "h-[29px]" : "h-[22px]"} ${dim ? "text-[#83878d]" : "text-[#1e1e1e]"}`}>
      {icon}
      {label && <span>{label}</span>}
      {caret && (
        <span className={label ? "pl-0.5" : ""}>
          <Caret dim={caret === "dim"} />
        </span>
      )}
    </button>
  );
}

function Group({ label, width, children }: { label: string; width: string; children: ReactNode }) {
  return (
    <div className={`flex shrink-0 flex-col border-r border-[#e2e3e4] ${width}`}>
      <div className="flex h-[75px]">{children}</div>
      <div className="text-center leading-[15px] text-[#4a4f57]">{label}</div>
    </div>
  );
}

function Ribbon({ active }: { active: boolean }) {
  return (
    <div className="flex h-[92px] shrink-0 border-b border-[#dadbdc] bg-[#f5f6f8] pl-px text-[11px]">
      <Group label="Clipboard" width="w-[263px]">
        <BigButton icon={<PinIcon blue={active} />} lines={["Pin to Quick", "access"]} width="w-[78px]" dim={active} />
        <BigButton icon={<CopyIcon on={active} />} lines={["Copy"]} width="w-[32px]" dim={!active} />
        <BigButton icon={<PasteIcon />} lines={["Paste"]} width="w-[50px]" dim />
        <div className="flex flex-col pt-1">
          <SmallButton icon={<CutIcon on={active} />} label="Cut" dim={!active} />
          <SmallButton icon={<CopyPathIcon on={active} />} label="Copy path" dim={!active} />
          <SmallButton icon={<PasteShortcutIcon />} label="Paste shortcut" dim />
        </div>
      </Group>
      <Group label="Organize" width="w-[165px]">
        <div className="my-2 flex w-[87px] flex-col border-r border-[#e2e3e4] pl-2">
          <SmallButton tall icon={<MoveToIcon on={active} />} label="Move to" dim={!active} caret={active ? "dark" : "dim"} />
          <SmallButton tall icon={<CopyToIcon on={active} />} label="Copy to" dim={!active} caret={active ? "dark" : "dim"} />
        </div>
        <div className="my-2 flex flex-col pl-[5px]">
          <SmallButton tall icon={<DeleteIcon on={active} />} label="Delete" dim={!active} caret="dark" />
          <SmallButton tall icon={<RenameIcon on={active} />} label="Rename" dim={!active} />
        </div>
      </Group>
      <Group label="New" width="w-[83px]">
        <BigButton icon={<NewFolderIcon />} lines={["New", "folder"]} width="w-[49px]" />
        <div className="flex flex-col pt-1">
          <SmallButton icon={<NewItemIcon />} caret="dark" />
          <SmallButton icon={<EasyAccessIcon />} caret="dark" />
        </div>
      </Group>
      <Group label="Open" width="w-[133px]">
        <BigButton icon={<PropertiesIcon />} lines={["Properties"]} width="w-[64px]" caret />
        <div className="flex flex-col pt-1">
          <SmallButton icon={<OpenIcon />} label="Open" dim caret="dim" />
          <SmallButton icon={<EditIcon />} label="Edit" dim />
          <SmallButton icon={<HistoryIcon />} label="History" />
        </div>
      </Group>
      <Group label="Select" width="w-[115px]">
        <div className="flex flex-col pl-[7px] pt-1">
          <SmallButton icon={<SelectTiles filled={[true, true, true, true]} />} label="Select all" />
          <SmallButton icon={<SelectTiles filled={[false, false, false, false]} />} label="Select none" />
          <SmallButton icon={<SelectTiles filled={[false, true, true, false]} />} label="Invert selection" />
        </div>
      </Group>
    </div>
  );
}

function QuickAccess({ lead }: { lead: ReactNode }) {
  return (
    <div className="flex items-center pl-[9px]">
      {lead}
      <span className="ml-[7px] h-3 w-px bg-[#8c8c8c]" />
      <span className="ml-[9px] flex items-center gap-1.5">
        <CheckPageIcon />
        <FolderIcon />
        <QatCaret />
      </span>
      <span className="ml-2 h-3 w-px bg-[#8c8c8c]" />
    </div>
  );
}

function Tabs() {
  return (
    <>
      <button className="h-full w-[56px] bg-[#0063b1] text-white">File</button>
      <button className="-mb-px h-[25px] w-[58px] border-x border-t border-[#dadbdc] bg-[#f5f6f8] pb-px">Home</button>
      <button className="h-full w-[58px]">Share</button>
      <button className="h-full w-[54px]">View</button>
    </>
  );
}

function Chevron({ d, color = "#555", className = "h-2 w-2.5", weight = 1.5 }: { d: string; color?: string; className?: string; weight?: number }) {
  return (
    <svg viewBox="0 0 10 8" className={className} aria-hidden="true">
      <path d={d} fill="none" stroke={color} strokeWidth={weight} />
    </svg>
  );
}

function ArrowGlyph({ d, color }: { d: string; color: string }) {
  return (
    <svg viewBox="0 0 14 14" className="h-3.5 w-3.5" aria-hidden="true">
      <path d={d} fill="none" stroke={color} strokeWidth="1.600" />
    </svg>
  );
}

const UP = "M1 6l4-4 4 4";
const DOWN = "M1 2l4 4 4-4";

function AddressBar({ title }: { title: string }) {
  return (
    <div className="flex h-[34px] shrink-0 items-center pb-px pl-[13px] pr-[13px]">
      <button aria-label="Back"><ArrowGlyph d="M13 7H1.500M6 2.500L1.500 7 6 11.500" color="#d2d2d2" /></button>
      <button aria-label="Forward" className="ml-[15px]"><ArrowGlyph d="M1 7h11.500M8 2.500L12.500 7 8 11.500" color="#d2d2d2" /></button>
      <button aria-label="Recent locations" className="ml-3"><Chevron d={DOWN} color="#c8c8c8" className="h-1.5 w-2" /></button>
      <button aria-label="Up" className="ml-[11px]"><ArrowGlyph d="M7 13V2M2 6.500L7 1.500l5 5" color="#555" /></button>
      <div className="ml-1.5 flex h-[22px] min-w-0 flex-1 items-center border border-[#d9d9d9] pl-[3px]">
        <FolderIcon />
        <Chevron d="M3 1l3 3-3 3" className="ml-[3px] h-2 w-2.5" />
        <span className="ml-[7px] flex-1 text-black">{title}</span>
        <button aria-label="Previous locations" className="mr-0.5"><Chevron d={DOWN} color="#666" weight={2} /></button>
        <button aria-label="Refresh" className="flex h-full w-[18px] items-center justify-center border-l border-[#d9d9d9]">
          <svg viewBox="0 0 12 12" className="h-3 w-3">
            <path d="M4 2.800A4.200 4.200 0 1 0 9.200 3.900" fill="none" stroke="#666" strokeWidth="1.500" />
            <path d="M10 .5v4H6" fill="none" stroke="#666" strokeWidth="1.400" />
          </svg>
        </button>
      </div>
      <label className="ml-3 flex h-[22px] w-[202px] shrink-0 items-center border border-[#d9d9d9] pl-2 pr-[7px]">
        <input aria-label={`Search ${title}`} placeholder={`Search ${title}`} className="w-full min-w-0 bg-transparent outline-none placeholder:text-[#6d6d6d]" />
        <svg viewBox="0 0 12 12" className="h-3 w-3 shrink-0">
          <circle cx="7.500" cy="4.500" r="3.500" fill="none" stroke="#555" strokeWidth="1.500" />
          <path d="M5 7L.8 11.200" stroke="#555" strokeWidth="1.800" />
        </svg>
      </label>
    </div>
  );
}

const tree: { label: string; icon: string; deep: boolean }[] = [
  { label: "Videos", icon: "video", deep: true },
  { label: "Local Disk (C:)", icon: "disk", deep: true },
  { label: "Libraries", icon: "library", deep: false },
  { label: "Network", icon: "network", deep: false },
  { label: "Control Panel", icon: "panel", deep: false },
  { label: "All Control Panel Items", icon: "panel", deep: true },
  { label: "Appearance and Personalization", icon: "appearance", deep: true },
  { label: "Clock and Region", icon: "clock", deep: true },
  { label: "Ease of Access", icon: "ease", deep: true },
  { label: "Hardware and Sound", icon: "hardware", deep: true },
  { label: "Network and Internet", icon: "internet", deep: true },
  { label: "Programs", icon: "programs", deep: true },
  { label: "System and Security", icon: "shield", deep: true },
  { label: "User Accounts", icon: "users", deep: true },
];

const files: { name: string; type: string; size: string; icon: ReactNode }[] = [
  { name: "lib", type: "File folder", size: "", icon: <FolderIcon /> },
  { name: "install_requirements.bat", type: "Windows Batch File", size: "1 KB", icon: <BatIcon /> },
  { name: "LICENSE", type: "File", size: "35 KB", icon: <PageIcon /> },
  { name: "lunar.py", type: "PY File", size: "3 KB", icon: <PageIcon /> },
  { name: "README.md", type: "MD File", size: "2 KB", icon: <PageIcon /> },
  { name: "requirements.txt", type: "Text Document", size: "1 KB", icon: <PageIcon lines /> },
  { name: "start.bat", type: "Windows Batch File", size: "1 KB", icon: <BatIcon /> },
];

function HeadCell({ children, pad = "pl-1.5" }: { children: ReactNode; pad?: string }) {
  return (
    <th className="h-8 p-0 text-left align-top font-normal">
      <div className={`relative flex h-[27px] items-center border-r border-[#e5e5e5] text-[#44587a] ${pad}`}>{children}</div>
    </th>
  );
}

function ExplorerWindow() {
  return (
    <section className="absolute left-[363px] top-[195px] flex h-[591px] w-[786px] flex-col overflow-hidden bg-white">
      <header className="flex h-[31px] shrink-0 items-center text-black">
        <QuickAccess lead={<FolderIcon />} />
        <span className="pl-[7px]">AI-Aimbot-main</span>
        <CaptionButtons color="#000" maxColor="#000" />
      </header>
      <nav className="flex h-6 shrink-0 items-center border-b border-[#dadbdc] pl-px text-[11px] text-[#262626]">
        <Tabs />
        <button aria-label="Collapse the ribbon" className="ml-auto"><Chevron d={UP} color="#999" weight={1.200} /></button>
        <button aria-label="Help" className="ml-[9px] mr-1 h-4 w-4 rounded-full bg-[#0a5cb4] font-bold leading-4 text-white">?</button>
      </nav>
      <Ribbon active={false} />
      <AddressBar title="AI-Aimbot-main" />
      <div className="flex min-h-0 flex-1">
        <ul className="w-[141px] shrink-0 overflow-hidden pt-px text-black">
          {tree.map((t) => (
            <li key={t.label} className={`flex h-6 items-center gap-[5px] ${t.deep ? "pl-[41px]" : "pl-[33px]"}`}>
              <TreeIcon name={t.icon} />
              <span>{t.label}</span>
            </li>
          ))}
        </ul>
        <div className="flex w-[15px] shrink-0 flex-col items-center bg-[#f0f0f0]">
          <span className="flex h-5 items-center"><Chevron d={UP} weight={1.800} /></span>
          <span className="mt-[227px] w-full flex-1 bg-[#cdcdcd]" />
        </div>
        <div className="min-w-0 flex-1">
          <table className="table-fixed border-collapse text-[11px]">
            <colgroup>
              <col className="w-[277px]" />
              <col className="w-[144px]" />
              <col className="w-[120px]" />
              <col className="w-[80px]" />
            </colgroup>
            <thead>
              <tr>
                <HeadCell pad="pl-[22px]">
                  Name
                  <span className="absolute left-[141px] top-0"><Chevron d={UP} color="#777" weight={1} /></span>
                </HeadCell>
                <HeadCell>Date modified</HeadCell>
                <HeadCell>Type</HeadCell>
                <HeadCell>Size</HeadCell>
              </tr>
            </thead>
            <tbody className="text-[#6d6d6d]">
              {files.map((f) => (
                <tr key={f.name} className="h-[21px]">
                  <td className="p-0 pl-[22px] text-black">
                    <span className="flex items-center gap-[5px]">
                      {f.icon}
                      {f.name}
                    </span>
                  </td>
                  <td className="p-0 pl-1.5">10/24/2024 2:54 PM</td>
                  <td className="p-0 pl-1.5">{f.type}</td>
                  <td className="p-0 pr-2 text-right">{f.size}</td>
                </tr>
              ))}
            </tbody>
          </table>
        </div>
      </div>
    </section>
  );
}

const downloads: { date?: string; selected?: boolean }[] = [
  {},
  { date: "10/24/2024 11:18 PM" },
  { date: "10/24/2024 11:18 PM", selected: true },
  {},
  { date: "3/27/2024 10:45 AM" },
  {},
  { date: "1/1/2023 1:57 PM" },
  { date: "5/6/2022 6:45 AM" },
  { date: "11/14/2020 10:25 AM" },
  { date: "9/18/2020 4:36 AM" },
  { date: "8/2/2018 1:08 AM" },
  { date: "5/8/2017 4:20 AM" },
];

function DownloadsWindow() {
  return (
    <section className="absolute left-[761px] top-[82px] flex h-[591px] w-[786px] flex-col overflow-hidden bg-white">
      <header className="flex h-[30px] shrink-0 items-center">
        <div className="w-[229px] shrink-0">
          <QuickAccess
            lead={
              <svg viewBox="0 0 16 16" className="h-4 w-4" aria-hidden="true">
                <path d="M5 0h6v7h4l-7 8-7-8h4z" fill="#2a7fd0" />
              </svg>
            }
          />
        </div>
        <div className="flex h-[27px] w-[159px] shrink-0 items-center justify-center self-end bg-[#fcc4de] text-[11px] text-[#3c2030]">Extract</div>
        <span className="pl-3 text-[11px] text-[#999]">Downloads</span>
      </header>
      <nav className="flex h-6 shrink-0 items-center border-b border-[#dadbdc] pl-px text-[11px] text-[#262626]">
        <div className="flex h-full w-[228px] shrink-0 items-center">
          <Tabs />
        </div>
        <button className="h-full w-[159px] shrink-0 border-x border-[#ececec]">Compressed Folder Tools</button>
      </nav>
      <Ribbon active />
      <AddressBar title="Downloads" />
      <div className="flex min-h-0 flex-1 pl-[388px]">
        <table className="h-fit w-full table-fixed border-collapse text-[11px] text-[#6d6d6d]">
          <colgroup>
            <col className="w-[44px]" />
            <col />
          </colgroup>
          <thead>
            <tr>
              <th aria-label="Name" className="p-0 align-top">
                <div className="h-[27px] border-r border-[#e5e5e5]" />
              </th>
              <th className="h-[27px] p-0 text-left font-normal text-[#44587a]">
                <div className="relative pl-1.5">
                  Date modified
                  <span className="absolute -top-2 left-[67px]"><Chevron d={DOWN} color="#777" weight={1} /></span>
                </div>
              </th>
            </tr>
          </thead>
          <tbody>
            {downloads.map((d, i) =>
              d.date ? (
                <tr key={i} className={`h-[21px] ${d.selected ? "bg-[#d9d9d9]" : ""}`}>
                  <td className="p-0" />
                  <td className="p-0 pl-1.5">{d.date}</td>
                </tr>
              ) : (
                <tr key={i}>
                  <td colSpan={2} className="h-8 p-0">
                    <div className="h-px bg-[#e2e2e2]" />
                  </td>
                </tr>
              ),
            )}
          </tbody>
        </table>
      </div>
      <div className="mb-6 h-[15px] shrink-0 bg-[#cdcdcd]" />
    </section>
  );
}

/* ---------- taskbar ---------- */

function Leaves() {
  return (
    <svg viewBox="0 0 72 34" className="h-[34px] w-[72px] shrink-0" aria-hidden="true">
      <path d="M2 32C10 25 16 15 19 3" fill="none" stroke="#8c3a20" strokeWidth="1.300" />
      <g fill="#c8452a">
        <path d="M18 10c-5-2-7-5-6-9 5 1 7 5 6 9zM14 19c-6-1-9-4-8-9 5 1 8 5 8 9zM10 26c-5 1-9-2-9-6 4-1 8 2 9 6z" />
        <path d="M19 10c0-5 3-8 8-9 0 5-3 9-8 9zM16 17c1-5 5-7 10-6-1 5-5 7-10 6zM12 24c2-4 6-6 11-4-2 4-6 6-11 4z" />
      </g>
      <path d="M24 20c4-1 5-2 7-5 1 2 2 1 4-3 1 2 3 1 6-2l1 3c3 0 6-1 8 0-2 1-3 2-3 4-2 0-3 1-3 3-3-1-4 0-5 2-3-1-5 0-7 1 0-2-2-3-8-3z" fill="#ee8a2a" />
      <path d="M24 20c8-1 17-4 27-8" fill="none" stroke="#a8531a" />
      <path d="M49 10c5-5 9-5 13-3 2-1 4-2 8-1-1 3-4 6-8 7-4 2-9 1-13-3z" fill="#e8a42c" />
      <path d="M50 8c4-3 5-4 8-4M49 10c6 0 12-1 19-3" fill="none" stroke="#6f6a22" strokeWidth="1.200" />
    </svg>
  );
}

function ExplorerGlyph() {
  return (
    <svg viewBox="0 0 24 24" className="h-6 w-6" aria-hidden="true">
      <path d="M1 3h8l2 2h11v4H1z" fill="#e4a51d" />
      <path d="M1 7h21v13H1z" fill="#fcd462" />
      <path d="M4 22v-7a2 2 0 0 1 2-2h12a2 2 0 0 1 2 2v7h-4v-5H8v5z" fill="#3a93dd" />
    </svg>
  );
}

function Taskbar() {
  return (
    <footer className="absolute inset-x-0 bottom-0 flex h-10 items-stretch bg-black/[0.860] text-white">
      <button aria-label="Start" className="flex w-12 items-center justify-center">
        <svg viewBox="0 0 16 16" className="h-4 w-4">
          <path d="M0 2.300L6.500 1.400v6.200H0zM7.400 1.300L16 0v7.600H7.400zM0 8.500h6.500v6.200L0 13.800zM7.400 8.500H16V16l-8.600-1.200z" fill="#fff" />
        </svg>
      </button>
      <label className="flex w-[288px] items-center border border-[#c4c4c4] bg-[#f1f1f1] pl-[11px] pr-0.5 text-[#2b2b2b]">
        <svg viewBox="0 0 18 18" className="h-[18px] w-[18px] shrink-0">
          <circle cx="11" cy="7" r="5.500" fill="none" stroke="#222" strokeWidth="1.300" />
          <path d="M7 11l-6 6" stroke="#222" strokeWidth="1.300" />
        </svg>
        <input aria-label="Type here to search" placeholder="Type here to search" className="ml-2.5 w-full min-w-0 bg-transparent text-sm outline-none placeholder:text-[#2b2b2b]" />
        <Leaves />
      </label>
      <button aria-label="Task view" className="flex w-12 items-center justify-center">
        <svg viewBox="0 0 18 18" className="h-[18px] w-[18px]" fill="none" stroke="#fff" strokeWidth="1.200">
          <path d="M1.500 1v3h9V1M1.500 6.500h9v5h-9zM1.500 17v-3h9v3M15.500 1v3.500M15.500 10v7M14.500 5.500h2v3h-2z" />
        </svg>
      </button>
      <div className="ml-[3px] flex gap-px">
        <button aria-label="Edge" className="flex w-12 flex-col items-center justify-between pt-2">
          <EdgeLogo className="h-6 w-6" id="edt" />
          <span className="h-0.5 w-10 bg-[#76b9ed]" />
        </button>
        <button aria-label="File Explorer" className="flex w-12 flex-col items-center justify-between bg-white/20 pt-2">
          <ExplorerGlyph />
          <span className="h-0.5 w-full bg-[#76b9ed]" />
        </button>
        <button aria-label="Firefox" className="flex w-12 flex-col items-center pt-2">
          <FirefoxLogo className="h-6 w-6" id="fft" />
        </button>
        <button aria-label="Python Setup" className="flex w-12 justify-center">
          <span className="flex w-10 flex-col items-center justify-between bg-linear-to-r from-[#3c8232] from-55% to-[#3a3a3a] to-55% pt-2">
            <PythonSetupIcon className="h-6 w-6" light />
            <span className="h-0.5 w-full bg-[#4fdc3c]" />
          </span>
        </button>
      </div>
      <div className="ml-auto flex items-center">
        <button aria-label="Show hidden icons" className="flex w-6 justify-center">
          <svg viewBox="0 0 14 8" className="h-2 w-3.5"><path d="M1 7l6-6 6 6" fill="none" stroke="#fff" strokeWidth="1.300" /></svg>
        </button>
        <button aria-label="Meet now" className="flex w-6 justify-center">
          <svg viewBox="0 0 16 16" className="h-4 w-4" fill="none" stroke="#fff" strokeWidth="1.200">
            <rect x="3" y="4.500" width="7" height="7" rx="1" />
            <path d="M10 7l3-1.500v5L10 9M4 1.500c2-1 5-1 7 0M4 14.500c2 1 5 1 7 0" />
          </svg>
        </button>
        <button aria-label="Network" className="flex w-6 justify-center">
          <svg viewBox="0 0 16 16" className="h-4 w-4" fill="none" stroke="#fff">
            <path d="M5.500 3.500h10v7h-10M9.500 10.500v3M6 13.500h7M.5 2.500h4v4h-4zM2.500 6.500v7h3" />
          </svg>
        </button>
        <button aria-label="Volume" className="flex w-6 justify-center">
          <svg viewBox="0 0 16 16" className="h-4 w-4" fill="none" stroke="#fff">
            <path d="M.5 5.500h2.500L7 2v12L3 10.500H.5zM9 5.500c1.300 1.500 1.300 3.500 0 5M11 4c2.200 2.400 2.200 5.600 0 8M13 2.500c3 3.300 3 7.700 0 11" />
          </svg>
        </button>
        <div className="w-16 text-center text-[11px] leading-[18px]">
          <div>11:20 PM</div>
          <div>10/24/2024</div>
        </div>
        <button aria-label="Notifications" className="flex w-10 justify-center">
          <svg viewBox="0 0 16 16" className="h-4 w-4" fill="none" stroke="#fff" strokeWidth="1.200">
            <path d="M.6 1h14.800v11.500H11l-3 3v-3H.6z" />
          </svg>
        </button>
        <span className="ml-2 mr-1 h-10 w-px bg-[#6c7080]" />
      </div>
    </footer>
  );
}

function Watermark() {
  return (
    <div className="pointer-events-none absolute bottom-[46px] right-[47px] flex items-center gap-1.5 text-[32px] leading-none text-white/80 [font-family:Roboto,sans-serif] [text-shadow:0_0_3px_rgba(0,0,0,0.350)]">
      <span>ANY</span>
      <svg viewBox="0 0 58 64" className="h-16 w-[58px] drop-shadow-[0_0_2px_rgba(0,0,0,0.350)]" fill="none" stroke="#fff" strokeWidth="3" aria-hidden="true">
        <path d="M14 4l40 26-40 28z" />
        <path d="M8 8H3v47l6 5M14 16l24 15-24 16" />
      </svg>
      <span>RUN</span>
    </div>
  );
}

export default function App() {
  return (
    <main className="relative h-screen overflow-hidden whitespace-nowrap bg-[linear-gradient(96deg,#00b2ff_0%,#00a8fb_24%,#0088e8_48%,#0070dc_58%,#004fcb_72%,#0238b4_100%)] text-xs [font-family:'Open_Sans','Noto_Sans',sans-serif]">
      <DesktopIcons />
      <DownloadsWindow />
      <InstallerWindow />
      <ExplorerWindow />
      <Watermark />
      <Taskbar />
    </main>
  );
}
